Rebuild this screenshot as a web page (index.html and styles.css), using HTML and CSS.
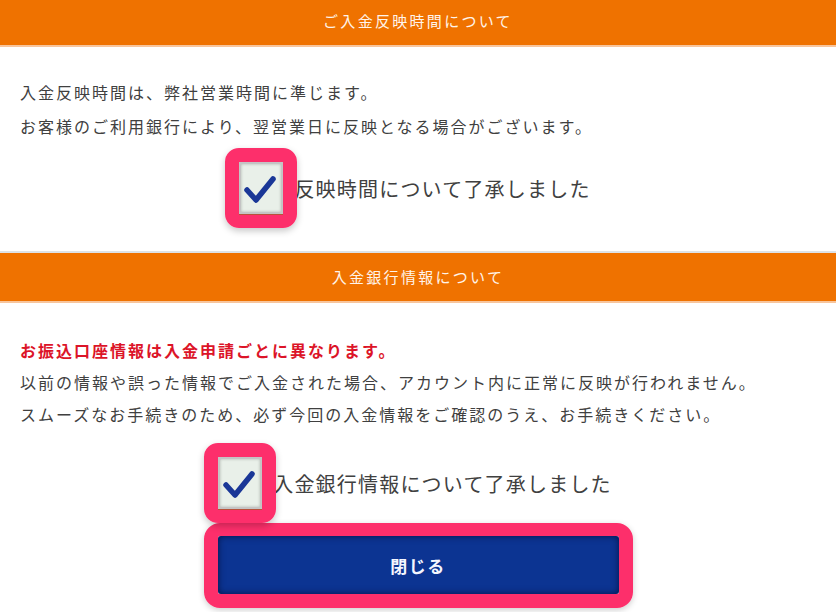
FILE: index.html
```html
<!DOCTYPE html>
<html lang="ja">
<head>
<meta charset="utf-8">
<title>入金確認</title>
<link rel="stylesheet" href="styles.css">
</head>
<body>
<div class="bar bar-first">ご入金反映時間について</div>
<section class="sec sec-one">
  <p class="line">入金反映時間は、弊社営業時間に準じます。</p>
  <p class="line">お客様のご利用銀行により、翌営業日に反映となる場合がございます。</p>
  <label class="agree">
    <span class="hl"><span class="box"><svg class="check" viewBox="0 0 40 48" width="40" height="48"><path d="M6 26 L15 36 L32 15" fill="none" stroke="#1a3797" stroke-width="5.5" stroke-linecap="round" stroke-linejoin="round"/></svg></span></span>
    <span class="txt">反映時間について了承しました</span>
  </label>
</section>
<div class="bar bar-second">入金銀行情報について</div>
<section class="sec sec-two">
  <p class="line warn">お振込口座情報は入金申請ごとに異なります。</p>
  <p class="line">以前の情報や誤った情報でご入金された場合、アカウント内に正常に反映が行われません。</p>
  <p class="line">スムーズなお手続きのため、必ず今回の入金情報をご確認のうえ、お手続きください。</p>
  <label class="agree agree-two">
    <span class="hl"><span class="box"><svg class="check" viewBox="0 0 40 48" width="40" height="48"><path d="M6 26 L15 36 L32 15" fill="none" stroke="#1a3797" stroke-width="5.5" stroke-linecap="round" stroke-linejoin="round"/></svg></span></span>
    <span class="txt">入金銀行情報について了承しました</span>
  </label>
  <div class="btn-hl"><button class="close" type="button">閉じる</button></div>
</section>
</body>
</html>
```
FILE: styles.css
```css
* { box-sizing: border-box; }
html, body {
  margin: 0;
  padding: 0;
  background: #fff;
}
body {
  font-family: "Noto Sans CJK JP", "Noto Sans", sans-serif;
  color: #404040;
  width: 836px;
  height: 612px;
  overflow: hidden;
}
.bar {
  background: #ef7200;
  color: #fff4ea;
  text-align: center;
  font-size: 15px;
  letter-spacing: 2.3px;
  border-bottom: 2px solid #f8c59c;
}
.bar-first {
  height: 47px;
  line-height: 42px;
}
.bar-second {
  margin-top: 23px;
  height: 52px;
  line-height: 47px;
  border-top: 2px solid #dde2e6;
}
.sec {
  padding: 0 20px;
}
.sec-one { padding-top: 28px; }
.sec-two { padding-top: 31px; }
.line {
  margin: 0;
  font-size: 16px;
  letter-spacing: 2px;
  line-height: 34px;
  white-space: nowrap;
}
.sec-two .line { line-height: 32px; }
.warn {
  color: #dc1428;
  font-weight: bold;
}
.agree {
  display: flex;
  align-items: center;
  justify-content: center;
  padding-right: 20px;
  margin-top: 5px;
}
.agree-two { margin-top: 13px; }
.hl {
  position: relative;
  z-index: 1;
  display: block;
  width: 72px;
  height: 80px;
  border: 14px solid #fd2f6b;
  border-radius: 14px;
  box-shadow: 0 3px 7px rgba(0, 0, 0, 0.22);
  flex: none;
}
.box {
  display: flex;
  align-items: center;
  justify-content: center;
  width: 100%;
  height: 100%;
  border: 2px solid #c4c4c4;
  background: #e9f0e9;
  box-shadow: inset 0 0 3px rgba(0, 0, 0, 0.25), 0 1px 0 #b8523a;
}
.check { display: block; }
.txt {
  margin-left: -3px;
  font-size: 20px;
  letter-spacing: 1.2px;
  color: #404040;
  white-space: nowrap;
}
.btn-hl {
  width: 429px;
  height: 85px;
  margin: 0 auto;
  border: 14px solid #fd2f6b;
  border-top-width: 13px;
  border-radius: 16px;
  box-shadow: 0 2px 6px rgba(0, 0, 0, 0.2);
}
.close {
  display: block;
  width: 100%;
  height: 100%;
  border: 0;
  border-radius: 3px;
  background: #0c3492;
  box-shadow: inset 0 0 7px rgba(0, 0, 30, 0.65);
  color: #f4f6ff;
  font-family: "Noto Sans CJK JP", "Noto Sans", sans-serif;
  font-size: 17px;
  font-weight: bold;
  letter-spacing: 1.5px;
  cursor: pointer;
}
```
